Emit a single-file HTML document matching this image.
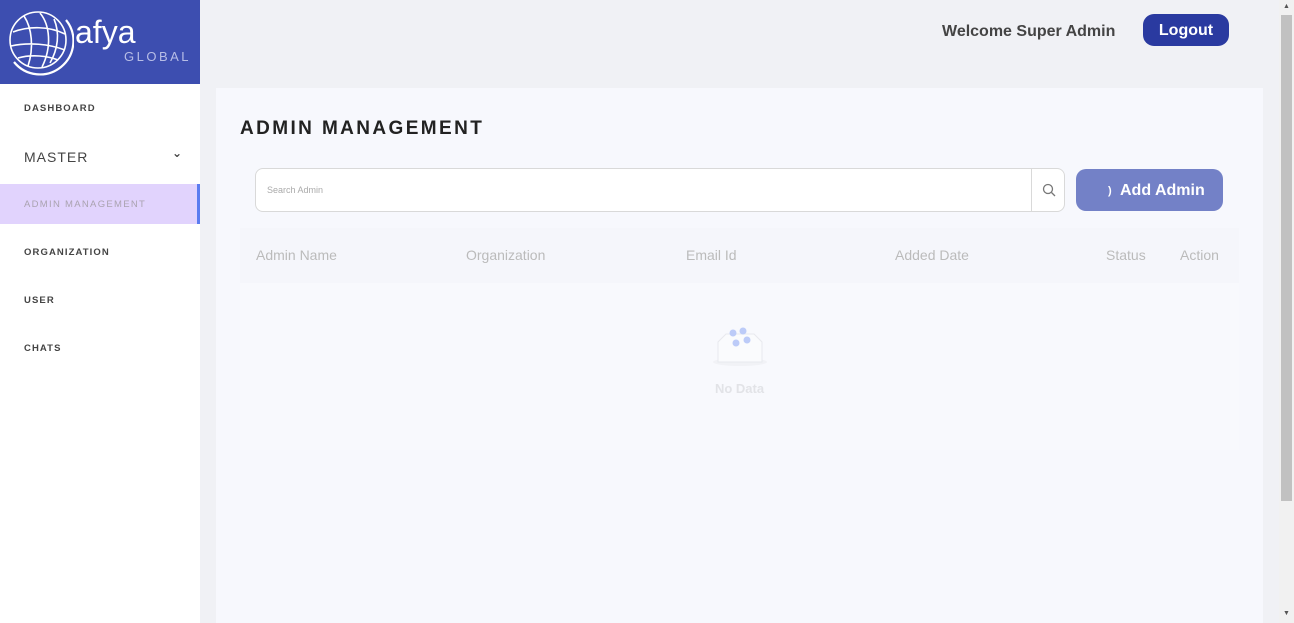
<!DOCTYPE html>
<html><head><style>
*{margin:0;padding:0;box-sizing:border-box}
body{width:1294px;height:623px;overflow:hidden;background:#f0f1f5;font-family:"Liberation Sans","DejaVu Sans",sans-serif;position:relative}
.side{position:absolute;left:0;top:0;width:200px;height:623px;background:#fff}
.logo{height:84px;background:#3d4eb0;position:relative;color:#fff}
.nav div{position:absolute;left:24px;font-size:9.5px;letter-spacing:1.1px;font-weight:bold;color:#444}
.act{position:absolute;left:0;top:184px;width:200px;height:40px;background:#e1d3fd;border-right:3px solid #5b7cf0}
.main{position:absolute;left:216px;top:88px;width:1047px;height:535px;background:#f7f8fd}
.sb{position:absolute;left:1279px;top:0;width:15px;height:623px;background:#f1f1f1}
</style></head><body>
<div class="side">
 <div class="logo">
  <svg width="70" height="70" style="position:absolute;left:4px;top:6px" viewBox="0 0 70 70" fill="none" stroke="#fff" stroke-width="1.6">
   <circle cx="34" cy="34" r="28"/><path d="M10 56A32 32 0 0 0 62 14" stroke-width="2.2"/>
   <path d="M20 10c8 12 10 32 4 50M36 7c10 12 12 34 2 54M50 13c6 14 4 30-4 44M9 26c16-6 36-6 52 2M7 40c18-4 38-2 54 4M14 52c14-4 30-2 40 2"/>
  </svg>
  <div style="position:absolute;left:75px;top:14px;font-size:32px;color:#fff">afya</div>
  <div style="position:absolute;left:124px;top:49px;font-size:13px;letter-spacing:2.5px;color:#b7bde6">GLOBAL</div>
 </div>
 <div class="act"></div>
 <div class="nav">
  <div style="top:103px">DASHBOARD</div>
  <div style="top:149px;font-size:14px;font-weight:normal;color:#444;letter-spacing:1px">MASTER</div>
  <div style="top:146px;left:172px;font-size:12px">⌄</div>
  <div style="top:199px;color:#aaa3b0;letter-spacing:1.3px;font-weight:normal">ADMIN MANAGEMENT</div>
  <div style="top:247px">ORGANIZATION</div>
  <div style="top:295px">USER</div>
  <div style="top:343px">CHATS</div>
 </div>
</div>
<div style="position:absolute;left:942px;top:23px;font-size:16px;font-weight:bold;color:#444">Welcome Super Admin</div>
<div style="position:absolute;left:1143px;top:14px;width:86px;height:32px;background:#2a3aa0;border-radius:11px;color:#fff;font-weight:bold;font-size:16px;text-align:center;line-height:34px">Logout</div>
<div class="main">
 <div style="position:absolute;left:24px;top:30px;font-size:19px;font-weight:bold;letter-spacing:2.4px;color:#222">ADMIN MANAGEMENT</div>
 <div style="position:absolute;left:39px;top:80px;width:810px;height:44px;background:#fff;border:1px solid #d9d9d9;border-radius:8px">
  <span style="position:absolute;left:11px;top:16px;font-size:9px;color:#aaa">Search Admin</span>
  <div style="position:absolute;right:0;top:0;width:33px;height:42px;border-left:1px solid #d9d9d9">
   <svg width="14" height="14" style="position:absolute;left:10px;top:14px" viewBox="0 0 14 14" fill="none" stroke="#777" stroke-width="1.3"><circle cx="6" cy="6" r="4.5"/><path d="M9.5 9.5l3.5 3.5"/></svg>
  </div>
 </div>
 <div style="position:absolute;left:860px;top:81px;width:147px;height:42px;background:#7381c7;border-radius:10px;color:#fff;font-weight:bold;font-size:16px;line-height:44px;padding-left:44px">Add Admin<span style="position:absolute;left:32px;font-size:11px">)</span></div>
 <div style="position:absolute;left:24px;top:140px;width:999px;height:222px;background:#f8f9fd">
  <div style="height:55px;background:#f5f6fb;font-size:14px;color:#bbb;position:relative">
   <span style="position:absolute;left:16px;top:19px">Admin Name</span>
   <span style="position:absolute;left:226px;top:19px">Organization</span>
   <span style="position:absolute;left:446px;top:19px">Email Id</span>
   <span style="position:absolute;left:655px;top:19px">Added Date</span>
   <span style="position:absolute;left:866px;top:19px">Status</span>
   <span style="position:absolute;left:940px;top:19px">Action</span>
  </div>
  <svg width="60" height="45" style="position:absolute;left:470px;top:96px" viewBox="0 0 60 45">
   <ellipse cx="30" cy="38" rx="27" ry="4" fill="#f1f2f6"/>
   <path d="M8 18l8-8h28l8 8v20H8z" fill="#fafbfd" stroke="#e8e9ee"/>
   <circle cx="23" cy="9" r="3.5" fill="#bccbf8"/><circle cx="33" cy="7" r="3.5" fill="#bccbf8"/>
   <circle cx="26" cy="19" r="3.5" fill="#bccbf8"/><circle cx="37" cy="16" r="3.5" fill="#bccbf8"/>
  </svg>
  <div style="position:absolute;left:0;width:999px;top:153px;text-align:center;font-size:13px;font-weight:bold;color:#e2e3e7">No Data</div>
 </div>
</div>
<div class="sb"><div style="position:absolute;left:2px;top:15px;width:11px;height:486px;background:#c1c1c1"></div>
<div style="position:absolute;left:4px;top:3px;font-size:7px;color:#555">▲</div><div style="position:absolute;left:4px;top:610px;font-size:7px;color:#555">▼</div></div>
</body></html>
